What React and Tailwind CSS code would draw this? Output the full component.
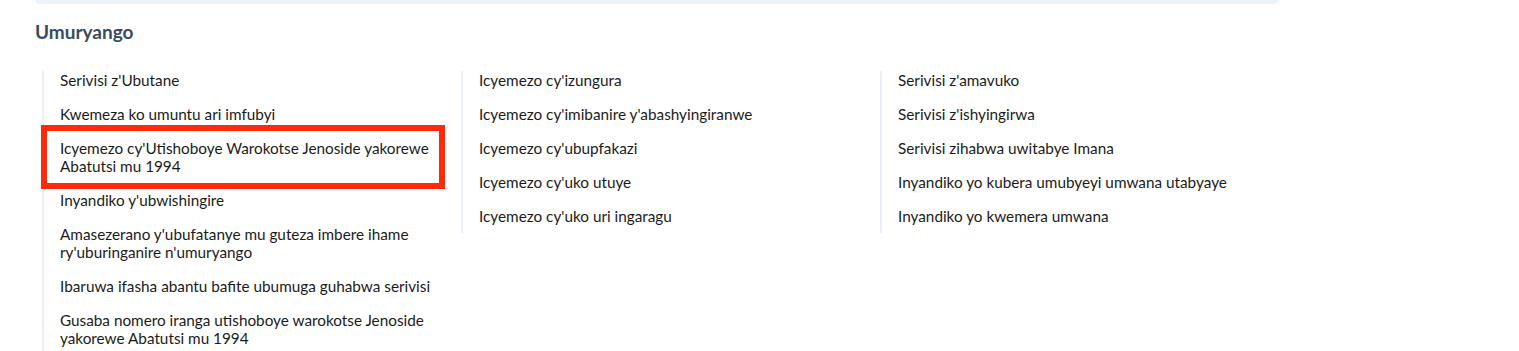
import React from 'react';

// wrapped labels carry their line breaks so the wrap matches the reference
const columns = [
  [
    ["Serivisi z'Ubutane"],
    ['Kwemeza ko umuntu ari imfubyi'],
    ["Icyemezo cy'Utishoboye Warokotse Jenoside yakorewe", 'Abatutsi mu 1994'],
    ["Inyandiko y'ubwishingire"],
    ["Amasezerano y'ubufatanye mu guteza imbere ihame", "ry'uburinganire n'umuryango"],
    ['Ibaruwa ifasha abantu bafite ubumuga guhabwa serivisi'],
    ['Gusaba nomero iranga utishoboye warokotse Jenoside', 'yakorewe Abatutsi mu 1994'],
  ],
  [
    ["Icyemezo cy'izungura"],
    ["Icyemezo cy'imibanire y'abashyingiranwe"],
    ["Icyemezo cy'ubupfakazi"],
    ["Icyemezo cy'uko utuye"],
    ["Icyemezo cy'uko uri ingaragu"],
  ],
  [
    ["Serivisi z'amavuko"],
    ["Serivisi z'ishyingirwa"],
    ['Serivisi zihabwa uwitabye Imana'],
    ['Inyandiko yo kubera umubyeyi umwana utabyaye'],
    ['Inyandiko yo kwemera umwana'],
  ],
];

const highlighted = "Icyemezo cy'Utishoboye Warokotse Jenoside yakorewe";

export default function App() {
  return (
    <div className="min-h-[351px] bg-white font-['Lato',sans-serif] text-[#1b1b1b]">
      {/* bottom edge of the card above */}
      <div className="ml-[36px] w-[1242px] h-[4px] rounded-b-lg bg-[#ebf2fa]" />

      <div className="pl-[35px] pt-[16px]">
        <h2 className="text-[19px] leading-[24px] font-bold text-[#3b4a5d]">Umuryango</h2>

        <div className="mt-[27px] ml-[7px] flex items-start">
          {columns.map((items, ci) => (
            <ul key={ci} className="w-[419px] border-l-2 border-[#eaf0fa] pl-[3px] pr-[22px]">
              {items.map((lines) => (
                <li
                  key={lines[0]}
                  className={`px-[13px] py-2 first:pt-0 text-[15.3px] leading-[18px] whitespace-nowrap ${
                    lines[0] === highlighted ? 'outline-[6px] outline-solid outline-[#ff2a0a]' : ''
                  }`}
                >
                  {lines.map((line, i) => (
                    <span key={i} className="block">
                      {line}
                    </span>
                  ))}
                </li>
              ))}
            </ul>
          ))}
        </div>
      </div>
    </div>
  );
}
